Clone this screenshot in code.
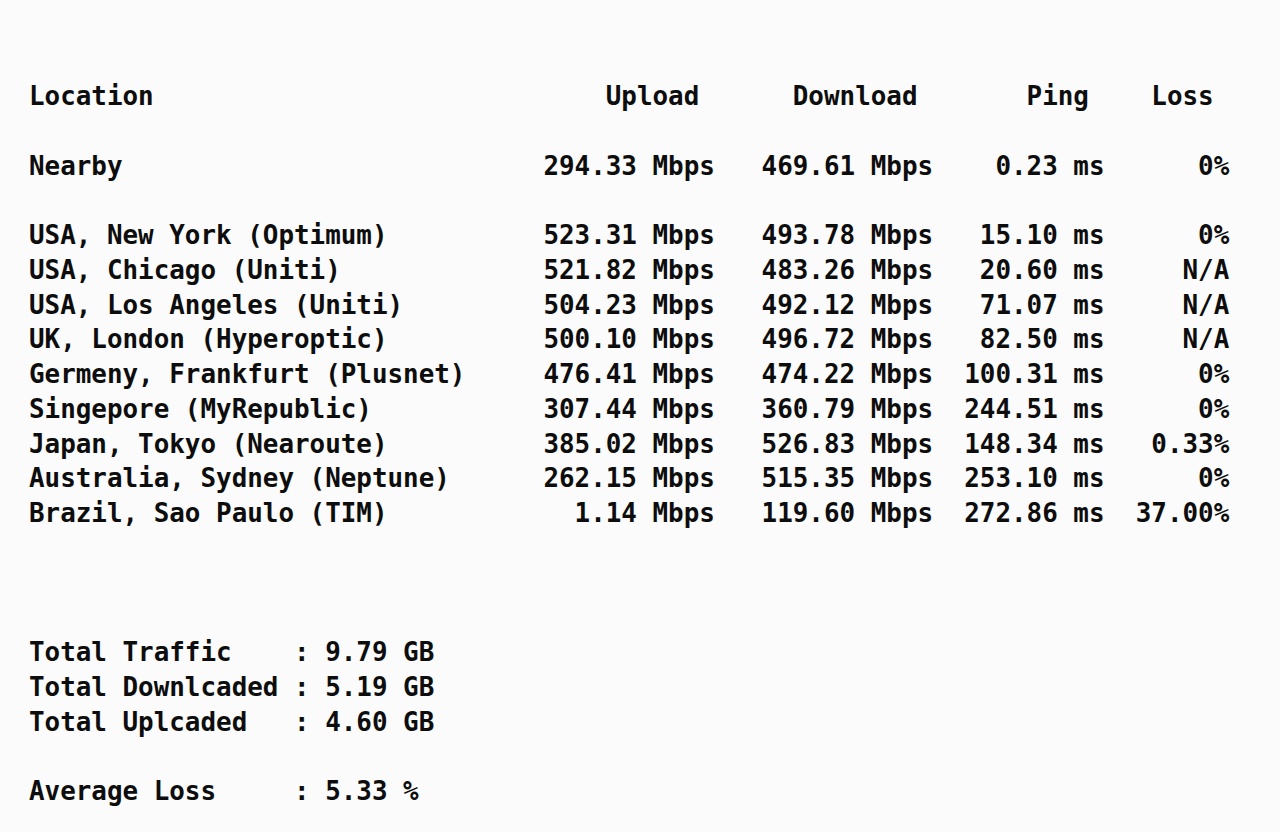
const servers = [
  { loc: "USA, New York (Optimum)", up: "523.31", down: "493.78", ping: "15.10", loss: "0%" },
  { loc: "USA, Chicago (Uniti)", up: "521.82", down: "483.26", ping: "20.60", loss: "N/A" },
  { loc: "USA, Los Angeles (Uniti)", up: "504.23", down: "492.12", ping: "71.07", loss: "N/A" },
  { loc: "UK, London (Hyperoptic)", up: "500.10", down: "496.72", ping: "82.50", loss: "N/A" },
  { loc: "Germeny, Frankfurt (Plusnet)", up: "476.41", down: "474.22", ping: "100.31", loss: "0%" },
  { loc: "Singepore (MyRepublic)", up: "307.44", down: "360.79", ping: "244.51", loss: "0%" },
  { loc: "Japan, Tokyo (Nearoute)", up: "385.02", down: "526.83", ping: "148.34", loss: "0.33%" },
  { loc: "Australia, Sydney (Neptune)", up: "262.15", down: "515.35", ping: "253.10", loss: "0%" },
  { loc: "Brazil, Sao Paulo (TIM)", up: "1.14", down: "119.60", ping: "272.86", loss: "37.00%" },
];

type Row = { loc: string; up: string; down: string; ping: string; loss: string };

function line(r: Row) {
  return (
    r.loc.padEnd(33) +
    `${r.up} Mbps`.padStart(11) +
    `${r.down} Mbps`.padStart(14) +
    `${r.ping} ms`.padStart(11) +
    r.loss.padStart(8)
  );
}

const header =
  "Location".padEnd(37) + "Upload".padEnd(12) + "Download".padEnd(15) + "Ping".padEnd(8) + "Loss";

export default function App() {
  const nearby = line({ loc: "Nearby", up: "294.33", down: "469.61", ping: "0.23", loss: "0%" });

  return (
    <div className="min-h-screen w-full bg-[#fbfbfb] text-[#0d0d0d]">
      <div
        className="whitespace-pre pl-[29px] pt-[79px] text-[25.9px] leading-[34.75px] font-bold"
        style={{ fontFamily: '"DejaVu Sans Mono", "Liberation Mono", monospace' }}
      >
        <div>{header}</div>
        <div>&nbsp;</div>
        <div>{nearby}</div>
        <div>&nbsp;</div>
        {servers.map((s) => (
          <div key={s.loc}>{line(s)}</div>
        ))}
        <div>&nbsp;</div>
        <div>&nbsp;</div>
        <div>&nbsp;</div>
        <div>{"Total Traffic    : 9.79 GB"}</div>
        <div>{"Total Downlcaded : 5.19 GB"}</div>
        <div>{"Total Uplcaded   : 4.60 GB"}</div>
        <div>&nbsp;</div>
        <div>{"Average Loss     : 5.33 %"}</div>
      </div>
    </div>
  );
}
